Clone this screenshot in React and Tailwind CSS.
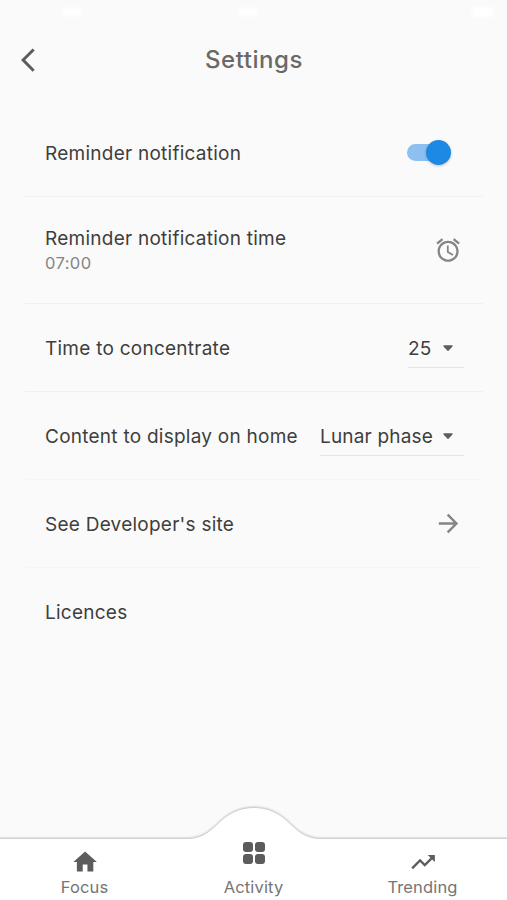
import React from "react";

function Icon({ d, size = 28.2, className = "" }) {
  return (
    <svg viewBox="0 0 24 24" width={size} height={size} className={`shrink-0 ${className}`} fill="currentColor">
      <path d={d} />
    </svg>
  );
}

const BACK = "M11.67 3.87L9.9 2.1 0 12l9.9 9.9 1.77-1.77L3.54 12z";
const ALARM =
  "M22 5.72l-4.6-3.86-1.29 1.53 4.6 3.86L22 5.72zM7.88 3.39L6.6 1.86 2 5.71l1.29 1.53 4.59-3.85zM12.5 8H11v6l4.75 2.85.75-1.23-4-2.37V8zM12 4c-4.97 0-9 4.03-9 9s4.02 9 9 9c4.97 0 9-4.03 9-9s-4.03-9-9-9zm0 16c-3.87 0-7-3.13-7-7s3.13-7 7-7 7 3.13 7 7-3.13 7-7 7z";
const ARROW = "M12 4l-1.41 1.41L16.17 11H4v2h12.17l-5.58 5.59L12 20l8-8z";
const HOME = "M10 20v-6h4v6h5v-8h3L12 3 2 12h3v8z";
const TRENDING = "M16 6l2.29 2.29-4.88 4.88-4-4L2 16.59 3.41 18l6-6 4 4 6.3-6.29L22 12V6z";

function Row({ title, subtitle, children, className = "h-[88px]", border = "border-b border-[#f0f0f0]" }) {
  return (
    <div className={`flex shrink-0 items-center justify-between pl-5 ${border} ${className}`}>
      <div className="whitespace-nowrap pt-0.5">
        <div className="text-[19px] leading-6 tracking-[0.25px] text-[#3e3e3e]">{title}</div>
        {subtitle && (
          <div className="text-[16.5px] leading-6 tracking-[0.4px] text-[#858585]">{subtitle}</div>
        )}
      </div>
      {children}
    </div>
  );
}

function Dropdown({ value }) {
  return (
    <div className="mr-[19px] mt-2 flex h-8 min-w-14 items-start justify-between border-b border-[#e4e4e4] pr-2.5">
      <span className="whitespace-nowrap pt-px text-[19px] leading-6 tracking-[0.18px] text-[#3e3e3e]">
        {value}
      </span>
      <svg viewBox="0 0 12 8" width="12" height="8" className="ml-[9px] mt-2">
        <path
          d="M2 2h8L6 6.2z"
          fill="#5e5e5e"
          stroke="#5e5e5e"
          strokeWidth="1.4"
          strokeLinejoin="round"
        />
      </svg>
    </div>
  );
}

function Tab({ label, children }) {
  return (
    <div className="flex flex-1 flex-col items-center justify-end pb-[3px] text-[#5c5c5c]">
      {children}
      <span className="text-[16.5px] leading-5 tracking-[0.15px] text-[#757575]">{label}</span>
    </div>
  );
}

export default function App() {
  return (
    <div className="flex h-[900px] w-[507px] flex-col overflow-hidden bg-[#fafafa] font-['Inter',sans-serif]">
      <div className="grid h-6 shrink-0 grid-cols-3 items-center pr-3">
        <div className="ml-[62px] h-2 w-5 rounded-full bg-white blur-[2px]" />
        <div className="ml-[73px] h-2 w-5 rounded-full bg-white blur-[2px]" />
        <div className="h-2.5 w-6 justify-self-end rounded-full bg-white blur-[2px]" />
      </div>

      <header className="grid h-[72px] shrink-0 grid-cols-[1fr_auto_1fr] items-center text-[#5c5c5c]">
        <Icon d={BACK} className="ml-[20.5px]" />
        <h1 className="pl-px text-[24px] font-medium leading-8 tracking-[0.55px] text-[#696969]">Settings</h1>
        <span />
      </header>

      <main className="flex flex-1 flex-col pl-[25px] pr-6 pt-[13px]">
        <Row title="Reminder notification">
          <div className="mr-8 flex h-[25px] w-[44px] items-center">
            <div className="flex h-[17px] w-[40px] items-center rounded-full bg-[#8dc0f1] pl-[19px]">
              <div className="size-[25px] shrink-0 rounded-full bg-[#1e88e5] shadow-[0_1px_3px_rgba(0,0,0,0.22)]" />
            </div>
          </div>
        </Row>
        <Row title="Reminder notification time" subtitle="07:00" className="h-[107px]">
          <Icon d={ALARM} className="mr-[21px] text-[#858585]" />
        </Row>
        <Row title="Time to concentrate">
          <Dropdown value="25" />
        </Row>
        <Row title="Content to display on home" border="border-b border-[#f5f5f5]">
          <Dropdown value="Lunar phase" />
        </Row>
        <Row title="See Developer's site" border="border-b border-[#f5f5f5]">
          <Icon d={ARROW} size={29} className="mr-5 text-[#858585]" />
        </Row>
        <Row title="Licences" border="" />
      </main>

      <nav className="relative flex h-[100px] shrink-0">
        <svg viewBox="0 0 507 100" className="absolute inset-0 h-full w-full">
          <path
            d="M-5 39H187C200 39 208 33.500 217 25C228 13.500 240 8 254 8C268 8 280 13.500 291 25C300 33.500 308 39 321 39H512V110H-5Z"
            fill="#fff"
            className="drop-shadow-[0_-1px_1px_rgba(0,0,0,0.25)]"
          />
        </svg>
        <div className="relative flex w-full">
          <Tab label="Focus">
            <Icon d={HOME} className="-mt-px mb-px ml-px" />
          </Tab>
          <Tab label="Activity">
            <div className="mb-[13px] ml-px grid grid-cols-2 gap-[2.5px]">
              <i className="size-[10px] rounded-[3px] bg-[#5c5c5c]" />
              <i className="size-[10px] rounded-[3px] bg-[#5c5c5c]" />
              <i className="size-[10px] rounded-[3px] bg-[#5c5c5c]" />
              <i className="size-[10px] rounded-[3px] bg-[#5c5c5c]" />
            </div>
          </Tab>
          <Tab label="Trending">
            <Icon d={TRENDING} className="mb-px ml-0.5" />
          </Tab>
        </div>
      </nav>
    </div>
  );
}
